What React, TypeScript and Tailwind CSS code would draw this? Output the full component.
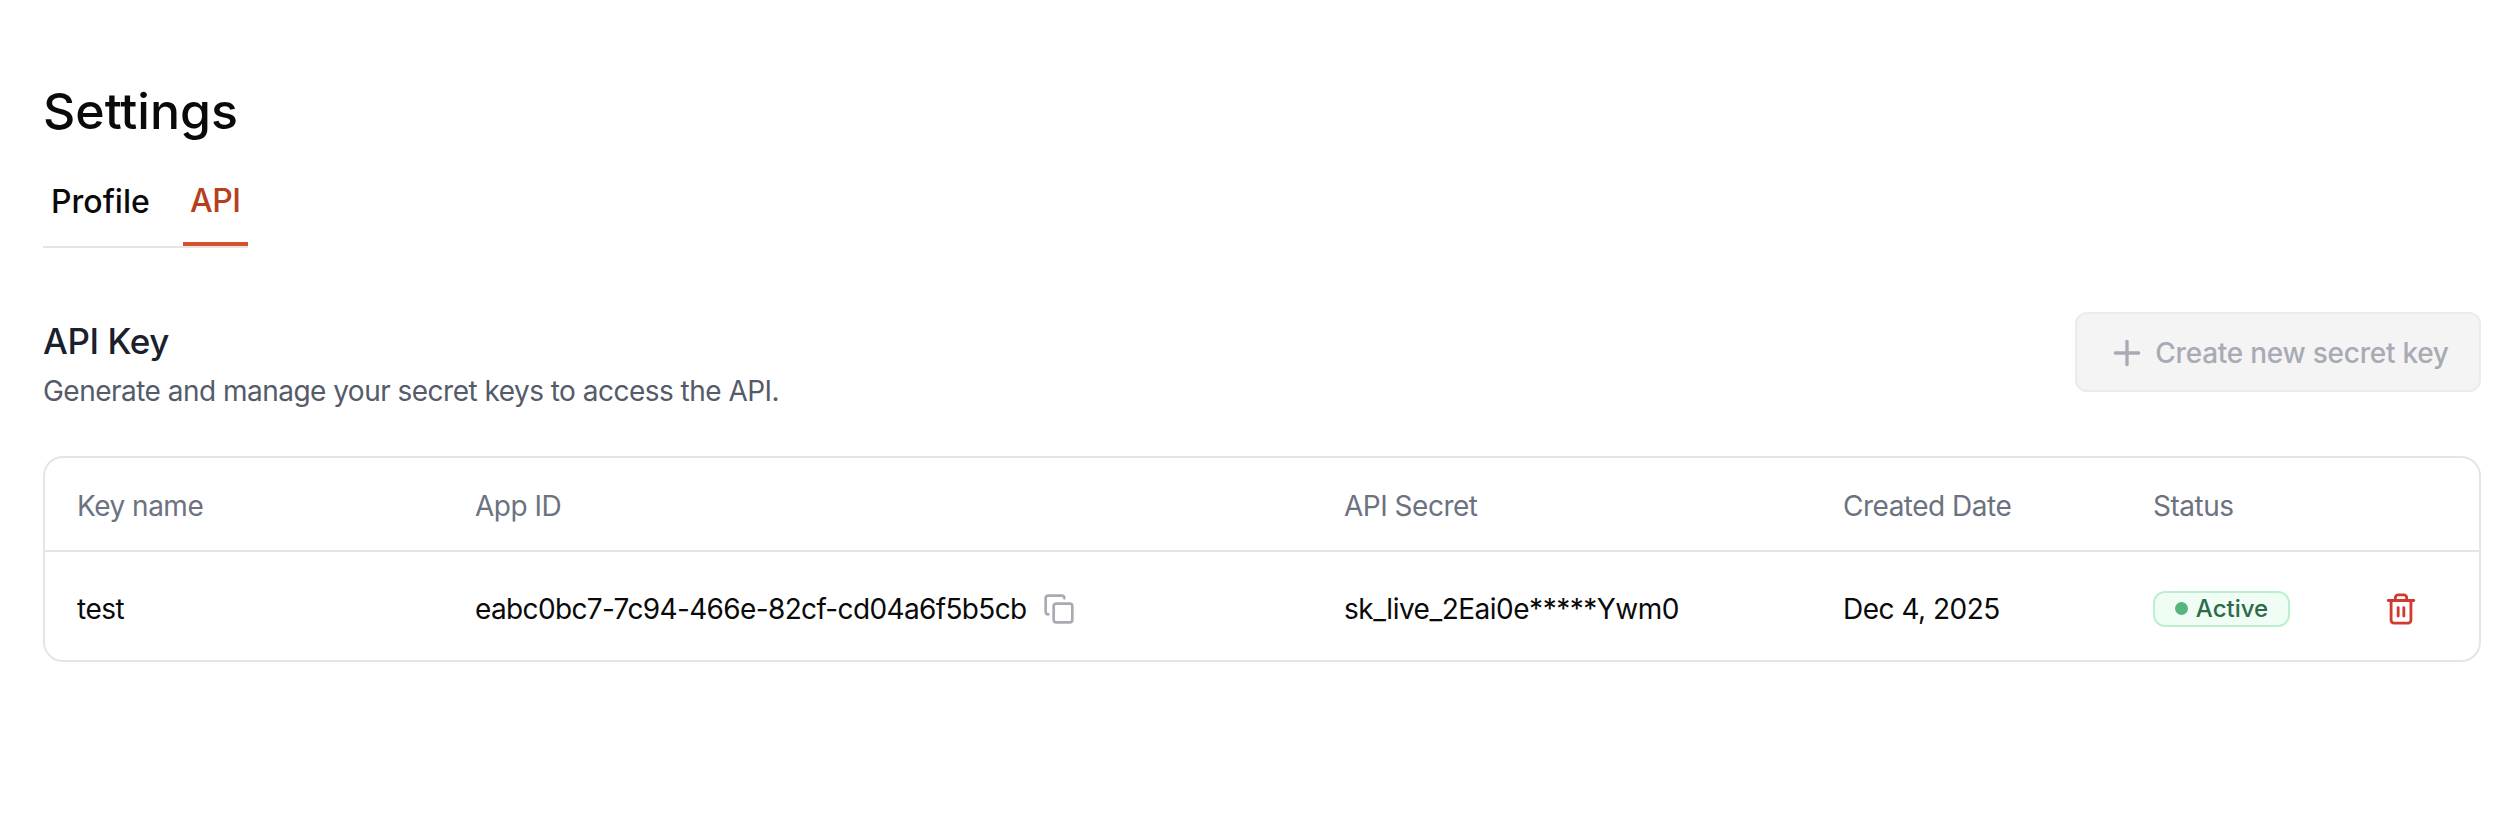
import { Copy, Plus, Trash2 } from 'lucide-react';

const font = "[font-family:Inter,'Liberation_Sans',sans-serif]";

function HeaderCell({ children }: { children: string }) {
  return <div className="text-[28px] tracking-[-0.5px] text-[#6b7280]">{children}</div>;
}

export default function App() {
  return (
    <div className={`${font} min-h-[836px] bg-white pl-[43px] pr-[31px] pt-[81px]`}>
      {/* Titre */}
      <h1 className="text-[50px] leading-[60px] font-medium text-[#0a0a0a]">Settings</h1>

      {/* Onglets */}
      <div className="mt-[35px] flex w-fit border-b-2 border-[#e5e5e5]">
        <button className="h-[70px] px-[8px] pb-[18px] text-[32px] font-medium text-[#0a0a0a]">Profile</button>
        <button className="-mb-[2px] ml-[25px] h-[70px] w-[65px] border-b-4 border-[#d4512a] pb-[16px] text-[32px] font-medium tracking-[-0.5px] text-[#b5401d]">
          API
        </button>
      </div>

      {/* En-tete de section */}
      <div className="mt-[71px] flex items-start justify-between">
        <div>
          <h2 className="text-[35px] leading-[44px] font-medium tracking-[-0.4px] text-[#1a202c]">API Key</h2>
          <p className="mt-[9px] text-[28px] leading-[38px] tracking-[-0.52px] text-[#555b69]">
            Generate and manage your secret keys to access the API.
          </p>
        </div>
        <button
          disabled
          className="mt-[-7px] flex h-[80px] w-[406px] items-center justify-center gap-[8px] rounded-[12px] border-2 border-[#ebebeb] bg-[#f4f4f5] pt-[2px] text-[28px] font-medium tracking-[-0.25px] text-[#a8abb3]"
        >
          <Plus className="h-[40px] w-[40px]" strokeWidth={2} />
          Create new secret key
        </button>
      </div>

      {/* Tableau */}
      <div className="mt-[46px] rounded-[20px] border-2 border-[#e5e5e5]">
        <div className="grid h-[94px] grid-cols-[398px_869px_499px_310px_1fr] items-center border-b-2 border-[#e5e5e5] pl-[32px] pt-[4px]">
          <HeaderCell>Key name</HeaderCell>
          <HeaderCell>App ID</HeaderCell>
          <HeaderCell>API Secret</HeaderCell>
          <HeaderCell>Created Date</HeaderCell>
          <HeaderCell>Status</HeaderCell>
        </div>
        <div className="grid h-[108px] grid-cols-[398px_869px_499px_310px_1fr] items-center pl-[32px] pt-[5px] text-[28px] tracking-[-0.5px] text-[#0a0a0a]">
          <div>test</div>
          <div className="flex items-center gap-[16px]">
            <span className="tracking-[-0.64px]">eabc0bc7-7c94-466e-82cf-cd04a6f5b5cb</span>
            <Copy className="h-[32px] w-[32px] text-[#a8abb3]" strokeWidth={2} />
          </div>
          <div>sk_live_2Eai0e*****Ywm0</div>
          <div>Dec 4, 2025</div>
          <div className="flex items-center">
            <span className="flex h-[36px] w-[137px] items-center justify-center gap-[8px] rounded-[12px] border-2 border-[#bbf0cf] bg-[#f0fdf5] text-[24px] font-medium tracking-[0px] text-[#2d6a4a]">
              <span className="h-[13px] w-[13px] rounded-full bg-[#56b47c]" />
              Active
            </span>
            <Trash2 className="ml-[94px] h-[34px] w-[34px] text-[#d13a2f]" strokeWidth={2} />
          </div>
        </div>
      </div>
    </div>
  );
}
